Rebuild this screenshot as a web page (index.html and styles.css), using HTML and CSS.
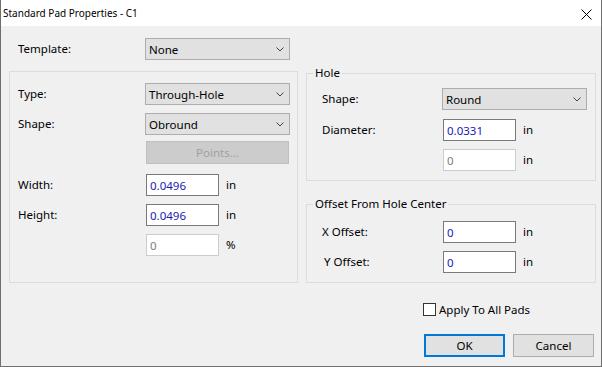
FILE: index.html
```html
<!DOCTYPE html>
<html lang="en">
<head>
<meta charset="utf-8">
<title>Standard Pad Properties - C1</title>
<link rel="stylesheet" href="styles.css">
</head>
<body>
<div class="window">
  <div class="titlebar">
    <span class="title">Standard Pad Properties - C1</span>
    <svg class="close" width="11" height="11" viewBox="0 0 11 11"><path d="M0.5 0.5L10.5 10.5M10.5 0.5L0.5 10.5" stroke="#000" stroke-width="1" fill="none"/></svg>
  </div>
  <div class="client">
    <div class="template-row">
      <span class="label">Template:</span>
      <div class="combo"><span class="combo-text">None</span><svg class="chev" width="8" height="5" viewBox="0 0 8 5"><path d="M0.5 0.5L4 4L7.5 0.5" stroke="#444" fill="none"/></svg></div>
    </div>
    <div class="columns">
      <div class="group pad-group">
        <div class="frow r-type">
          <span class="label">Type:</span>
          <div class="combo"><span class="combo-text">Through-Hole</span><svg class="chev" width="8" height="5" viewBox="0 0 8 5"><path d="M0.5 0.5L4 4L7.5 0.5" stroke="#444" fill="none"/></svg></div>
        </div>
        <div class="frow r-shape">
          <span class="label">Shape:</span>
          <div class="combo"><span class="combo-text">Obround</span><svg class="chev" width="8" height="5" viewBox="0 0 8 5"><path d="M0.5 0.5L4 4L7.5 0.5" stroke="#444" fill="none"/></svg></div>
        </div>
        <div class="frow r-points">
          <span class="label"></span>
          <button class="points" disabled>Points...</button>
        </div>
        <div class="frow r-width">
          <span class="label">Width:</span>
          <input class="field" value="0.0496">
          <span class="unit">in</span>
        </div>
        <div class="frow r-next">
          <span class="label">Height:</span>
          <input class="field" value="0.0496">
          <span class="unit">in</span>
        </div>
        <div class="frow r-next">
          <span class="label"></span>
          <input class="field off" value="0" disabled>
          <span class="unit">%</span>
        </div>
      </div>
      <div class="right-col">
        <fieldset class="group hole">
          <legend>Hole</legend>
          <div class="frow h-shape">
            <span class="label">Shape:</span>
            <div class="combo"><span class="combo-text">Round</span><svg class="chev" width="8" height="5" viewBox="0 0 8 5"><path d="M0.5 0.5L4 4L7.5 0.5" stroke="#444" fill="none"/></svg></div>
          </div>
          <div class="frow h-diam">
            <span class="label">Diameter:</span>
            <input class="field" value="0.0331">
            <span class="unit">in</span>
          </div>
          <div class="frow r-next">
            <span class="label"></span>
            <input class="field off" value="0" disabled>
            <span class="unit">in</span>
          </div>
        </fieldset>
        <fieldset class="group offset">
          <legend>Offset From Hole Center</legend>
          <div class="frow o-x">
            <span class="label">X Offset:</span>
            <input class="field" value="0">
            <span class="unit">in</span>
          </div>
          <div class="frow r-next">
            <span class="label ylabel">Y Offset:</span>
            <input class="field" value="0">
            <span class="unit">in</span>
          </div>
        </fieldset>
      </div>
    </div>
    <div class="footer">
      <label class="check"><span class="box"></span><span>Apply To All Pads</span></label>
      <div class="buttons">
        <button class="btn default">OK</button>
        <button class="btn">Cancel</button>
      </div>
    </div>
  </div>
</div>
</body>
</html>
```

FILE: styles.css
```css
* { box-sizing: border-box; }
html, body { margin: 0; padding: 0; background: #f0f0f0; }
body {
  font-family: "Noto Sans", "Open Sans", sans-serif;
  font-size: 11.5px;
  color: #000;
}
.window {
  width: 602px;
  height: 367px;
  border: 1px solid #6f6f6f;
  border-top: none;
  background: #f0f0f0;
  display: flex;
  flex-direction: column;
}
.titlebar {
  height: 26px;
  flex: none;
  background: #fff;
  display: flex;
  align-items: center;
  padding-left: 2px;
}
.title { font-size: 10px; line-height: 14px; }
.close { margin-left: auto; margin-right: 9px; margin-top: 2px; }
.client {
  flex: 1;
  padding: 12px 7px 0 8px;
}
.template-row {
  display: flex;
  align-items: center;
  height: 22px;
  padding-left: 9px;
}
.label { width: 127px; flex: none; line-height: 14px; }
.combo {
  width: 145px;
  height: 22px;
  border: 1px solid #adadad;
  background: #e1e1e1;
  display: flex;
  align-items: center;
  padding-left: 3px;
  padding-right: 5px;
}
.combo-text { flex: 1; }
.chev { flex: none; }
.columns {
  display: grid;
  grid-template-columns: 289px 290px;
  column-gap: 8px;
  align-items: start;
  margin-top: 6px;
}
.group { border: 1px solid #dcdcdc; }
.pad-group {
  margin-top: 5px;
  height: 212px;
  padding: 11px 0 0 8px;
}
.frow {
  display: flex;
  align-items: center;
  height: 22px;
}
.r-shape { margin-top: 8px; }
.r-points { margin-top: 6px; height: 23px; }
.r-width { margin-top: 10px; }
.r-next { margin-top: 8px; }
.points {
  width: 143px;
  height: 23px;
  margin: 0 0 0 1px;
  border: 1px solid #bfbfbf;
  background: #cccccc;
  color: #a0a0a0;
  font: inherit;
  padding: 0;
}
.field {
  width: 73px;
  height: 22px;
  margin: 0 0 0 1px;
  border: 1px solid #7a7a7a;
  background: #fff;
  color: #1a1ab4;
  font: inherit;
  padding: 0 0 0 3px;
  outline: none;
}
.field.off {
  border-color: #cccccc;
  color: #7d7d7d;
  background: #fff;
}
.unit { margin-left: 7px; line-height: 14px; }
.right-col { display: flex; flex-direction: column; }
fieldset.group {
  margin: 0;
  padding: 0 0 9px 15px;
  min-width: 0;
}
fieldset.group legend {
  margin-left: -9px;
  padding: 0 2px;
  line-height: 14px;
  font-weight: normal;
}
fieldset.group .label { width: 120px; }
.h-shape { margin-top: 8px; }
.h-diam { margin-top: 9px; }
fieldset.offset { margin-top: 16px; }
.o-x { margin-top: 10px; }
.ylabel { padding-left: 2px; }
.footer {
  display: flex;
  flex-direction: column;
  align-items: flex-end;
  margin-top: 20px;
}
.check {
  width: 171px;
  height: 13px;
  display: flex;
  align-items: center;
}
.box {
  width: 13px;
  height: 13px;
  border: 1px solid #333;
  background: #fff;
  margin-right: 3px;
  flex: none;
}
.buttons {
  display: flex;
  gap: 8px;
  margin-top: 18px;
}
.btn {
  width: 81px;
  height: 23px;
  margin: 0;
  padding: 0;
  border: 1px solid #adadad;
  background: #e1e1e1;
  font: inherit;
  color: #000;
}
.btn.default { border: 2px solid #0078d7; }
```
